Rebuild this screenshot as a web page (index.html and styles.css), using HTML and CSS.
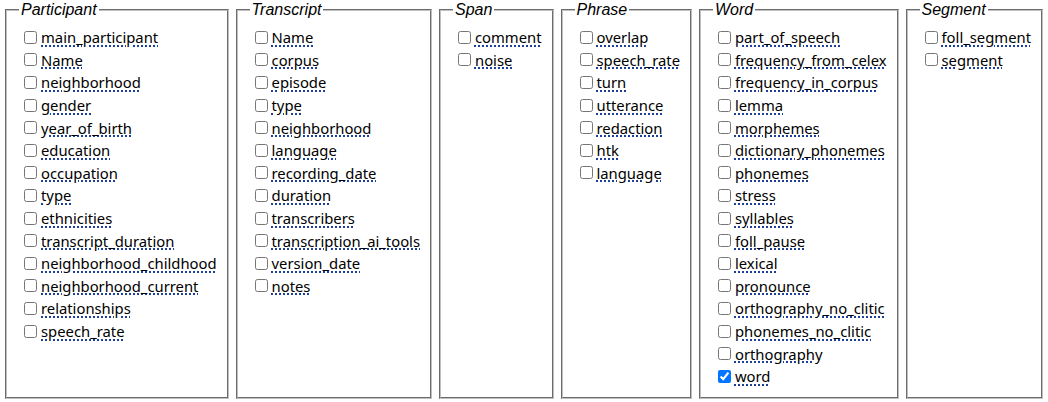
FILE: index.html
```html
<!DOCTYPE html>
<html>
<head>
<meta charset="utf-8">
<link rel="stylesheet" href="styles.css">
</head>
<body>
<div class="layers">
  <fieldset class="group">
    <legend>Participant</legend>
    <label class="row"><input type="checkbox"><span class="name">main_participant</span></label>
    <label class="row"><input type="checkbox"><span class="name">Name</span></label>
    <label class="row"><input type="checkbox"><span class="name">neighborhood</span></label>
    <label class="row"><input type="checkbox"><span class="name">gender</span></label>
    <label class="row"><input type="checkbox"><span class="name">year_of_birth</span></label>
    <label class="row"><input type="checkbox"><span class="name">education</span></label>
    <label class="row"><input type="checkbox"><span class="name">occupation</span></label>
    <label class="row"><input type="checkbox"><span class="name">type</span></label>
    <label class="row"><input type="checkbox"><span class="name">ethnicities</span></label>
    <label class="row"><input type="checkbox"><span class="name">transcript_duration</span></label>
    <label class="row"><input type="checkbox"><span class="name">neighborhood_childhood</span></label>
    <label class="row"><input type="checkbox"><span class="name">neighborhood_current</span></label>
    <label class="row"><input type="checkbox"><span class="name">relationships</span></label>
    <label class="row"><input type="checkbox"><span class="name">speech_rate</span></label>
  </fieldset>
  <fieldset class="group">
    <legend>Transcript</legend>
    <label class="row"><input type="checkbox"><span class="name">Name</span></label>
    <label class="row"><input type="checkbox"><span class="name">corpus</span></label>
    <label class="row"><input type="checkbox"><span class="name">episode</span></label>
    <label class="row"><input type="checkbox"><span class="name">type</span></label>
    <label class="row"><input type="checkbox"><span class="name">neighborhood</span></label>
    <label class="row"><input type="checkbox"><span class="name">language</span></label>
    <label class="row"><input type="checkbox"><span class="name">recording_date</span></label>
    <label class="row"><input type="checkbox"><span class="name">duration</span></label>
    <label class="row"><input type="checkbox"><span class="name">transcribers</span></label>
    <label class="row"><input type="checkbox"><span class="name">transcription_ai_tools</span></label>
    <label class="row"><input type="checkbox"><span class="name">version_date</span></label>
    <label class="row"><input type="checkbox"><span class="name">notes</span></label>
  </fieldset>
  <fieldset class="group">
    <legend>Span</legend>
    <label class="row"><input type="checkbox"><span class="name">comment</span></label>
    <label class="row"><input type="checkbox"><span class="name">noise</span></label>
  </fieldset>
  <fieldset class="group">
    <legend>Phrase</legend>
    <label class="row"><input type="checkbox"><span class="name">overlap</span></label>
    <label class="row"><input type="checkbox"><span class="name">speech_rate</span></label>
    <label class="row"><input type="checkbox"><span class="name">turn</span></label>
    <label class="row"><input type="checkbox"><span class="name">utterance</span></label>
    <label class="row"><input type="checkbox"><span class="name">redaction</span></label>
    <label class="row"><input type="checkbox"><span class="name">htk</span></label>
    <label class="row"><input type="checkbox"><span class="name">language</span></label>
  </fieldset>
  <fieldset class="group">
    <legend>Word</legend>
    <label class="row"><input type="checkbox"><span class="name">part_of_speech</span></label>
    <label class="row"><input type="checkbox"><span class="name">frequency_from_celex</span></label>
    <label class="row"><input type="checkbox"><span class="name">frequency_in_corpus</span></label>
    <label class="row"><input type="checkbox"><span class="name">lemma</span></label>
    <label class="row"><input type="checkbox"><span class="name">morphemes</span></label>
    <label class="row"><input type="checkbox"><span class="name">dictionary_phonemes</span></label>
    <label class="row"><input type="checkbox"><span class="name">phonemes</span></label>
    <label class="row"><input type="checkbox"><span class="name">stress</span></label>
    <label class="row"><input type="checkbox"><span class="name">syllables</span></label>
    <label class="row"><input type="checkbox"><span class="name">foll_pause</span></label>
    <label class="row"><input type="checkbox"><span class="name">lexical</span></label>
    <label class="row"><input type="checkbox"><span class="name">pronounce</span></label>
    <label class="row"><input type="checkbox"><span class="name">orthography_no_clitic</span></label>
    <label class="row"><input type="checkbox"><span class="name">phonemes_no_clitic</span></label>
    <label class="row"><input type="checkbox"><span class="name">orthography</span></label>
    <label class="row"><input type="checkbox" checked><span class="name">word</span></label>
  </fieldset>
  <fieldset class="group">
    <legend>Segment</legend>
    <label class="row"><input type="checkbox"><span class="name">foll_segment</span></label>
    <label class="row"><input type="checkbox"><span class="name">segment</span></label>
  </fieldset>
</div>
</body>
</html>
```
FILE: styles.css
```css
html, body {
  margin: 0;
  padding: 0;
  background: #ffffff;
}
.layers {
  display: flex;
  align-items: stretch;
  justify-content: space-between;
  padding: 1px 5px 0;
  height: 399px;
  box-sizing: border-box;
}
.group {
  margin: 0;
  padding: 7px 10px 8px 13px;
  border: 2px groove #c0c0c0;
  font-family: "Noto Sans", sans-serif;
  font-size: 14.8px;
  color: #000;
}
.group legend {
  font-family: "Liberation Sans", Arial, sans-serif;
  font-style: italic;
  font-size: 16px;
  padding: 0 2px;
  margin-left: -1px;
}
.row {
  display: flex;
  align-items: center;
  height: 22.6px;
  white-space: nowrap;
}
.row input {
  margin: 0 4px 0 4px;
  width: 13px;
  height: 13px;
}
.name {
  text-decoration: underline dotted #1d3f99;
  text-decoration-thickness: 2px;
  text-underline-offset: 2px;
}
```
